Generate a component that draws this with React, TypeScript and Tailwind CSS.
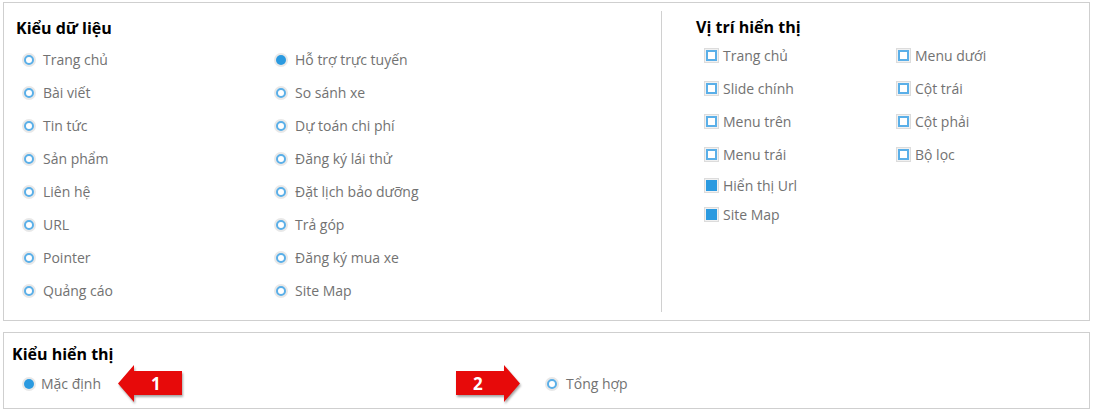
import React from "react";

const leftA = ["Trang chủ", "Bài viết", "Tin tức", "Sản phẩm", "Liên hệ", "URL", "Pointer", "Quảng cáo"];
const leftB = [
  "Hỗ trợ trực tuyến",
  "So sánh xe",
  "Dự toán chi phí",
  "Đăng ký lái thử",
  "Đặt lịch bảo dưỡng",
  "Trả góp",
  "Đăng ký mua xe",
  "Site Map",
];

const posA = [
  { label: "Trang chủ", on: false, h: "h-[33px]" },
  { label: "Slide chính", on: false, h: "h-[33px]" },
  { label: "Menu trên", on: false, h: "h-[33px]" },
  { label: "Menu trái", on: false, h: "h-[33px]" },
  { label: "Hiển thị Url", on: true, h: "h-[29px]" },
  { label: "Site Map", on: true, h: "h-[29px]" },
];
const posB = ["Menu dưới", "Cột trái", "Cột phải", "Bộ lọc"];

const Radio = ({ checked }: { checked?: boolean }) => (
  <span className="flex h-[14px] w-[14px] shrink-0 items-center justify-center rounded-full bg-[#e8e8e8]">
    {checked ? (
      <span className="h-[10px] w-[10px] rounded-full bg-[#2b9ae0]" />
    ) : (
      <span className="h-[10px] w-[10px] rounded-full border-2 border-[#5aafe8] bg-white" />
    )}
  </span>
);

const Check = ({ checked }: { checked?: boolean }) => (
  <span className="flex h-[15px] w-[15px] shrink-0 items-center justify-center border border-[#dcdcdc] bg-[#f1f1f1]">
    {checked ? (
      <span className="h-[11px] w-[11px] bg-[#2b9ae0]" />
    ) : (
      <span className="h-[11px] w-[11px] border-2 border-[#5aafe8] bg-white" />
    )}
  </span>
);

const Arrow = ({ n, dir }: { n: string; dir: "left" | "right" }) => (
  <span className="relative flex h-[37px] w-[66px] shrink-0 items-center">
    <svg width="66" height="37" viewBox="0 0 66 37" className="absolute inset-0 drop-shadow-[1px_2px_1px_rgba(0,0,0,0.35)]">
      {dir === "left" ? (
        <polygon points="0,18.5 16,0 16,6 64,6 64,30 16,30 16,37" fill="#e70a0a" />
      ) : (
        <polygon points="66,18.5 50,0 50,6 2,6 2,30 50,30 50,37" fill="#e70a0a" />
      )}
    </svg>
    <span
      className={`relative text-[17px] font-bold leading-none text-white ${dir === "left" ? "ml-[33px]" : "ml-[19px]"}`}
    >
      {n}
    </span>
  </span>
);

export default function App() {
  return (
    <div className="w-[1094px] bg-white pl-[3px] pt-[2px] font-['Open_Sans','Liberation_Sans',sans-serif] text-[14px] text-[#727272]">
      <div className="flex h-[319px] w-[1087px] border border-[#cfcfcf]">
        <div className="w-[657px] pl-[12px] pt-[12px]">
          <h2 className="text-[16px] font-bold leading-[26px] text-black">Kiểu dữ liệu</h2>
          <div className="mt-[2px] flex">
            <div className="w-[258px] pl-[6px]">
              {leftA.map((t) => (
                <div key={t} className="flex h-[33px] items-center gap-[7px]">
                  <Radio />
                  <span>{t}</span>
                </div>
              ))}
            </div>
            <div>
              {leftB.map((t, i) => (
                <div key={t} className="flex h-[33px] items-center gap-[7px]">
                  <Radio checked={i === 0} />
                  <span>{t}</span>
                </div>
              ))}
            </div>
          </div>
        </div>
        <div className="my-[8px] w-px bg-[#d0d0d0]" />
        <div className="flex-1 pl-[34px] pt-[12px]">
          <h2 className="text-[16px] font-bold leading-[24px] text-black">Vị trí hiển thị</h2>
          <div className="flex">
            <div className="w-[200px] pl-[8px]">
              {posA.map((p) => (
                <div key={p.label} className={`flex items-center gap-[4px] ${p.h}`}>
                  <Check checked={p.on} />
                  <span>{p.label}</span>
                </div>
              ))}
            </div>
            <div>
              {posB.map((t) => (
                <div key={t} className="flex h-[33px] items-center gap-[4px]">
                  <Check />
                  <span>{t}</span>
                </div>
              ))}
            </div>
          </div>
        </div>
      </div>
      <div className="mt-[11px] h-[77px] w-[1087px] border border-[#cfcfcf] pl-[8px] pt-[10px]">
        <h2 className="text-[16px] font-bold leading-[22px] text-black">Kiểu hiển thị</h2>
        <div className="flex items-center">
          <div className="flex items-center gap-[5px] pl-[10px]">
            <Radio checked />
            <span>Mặc định</span>
          </div>
          <div className="ml-[17px]">
            <Arrow n="1" dir="left" />
          </div>
          <div className="ml-[270px]">
            <Arrow n="2" dir="right" />
          </div>
          <div className="ml-[25px] flex items-center gap-[7px]">
            <Radio />
            <span>Tổng hợp</span>
          </div>
        </div>
      </div>
    </div>
  );
}
